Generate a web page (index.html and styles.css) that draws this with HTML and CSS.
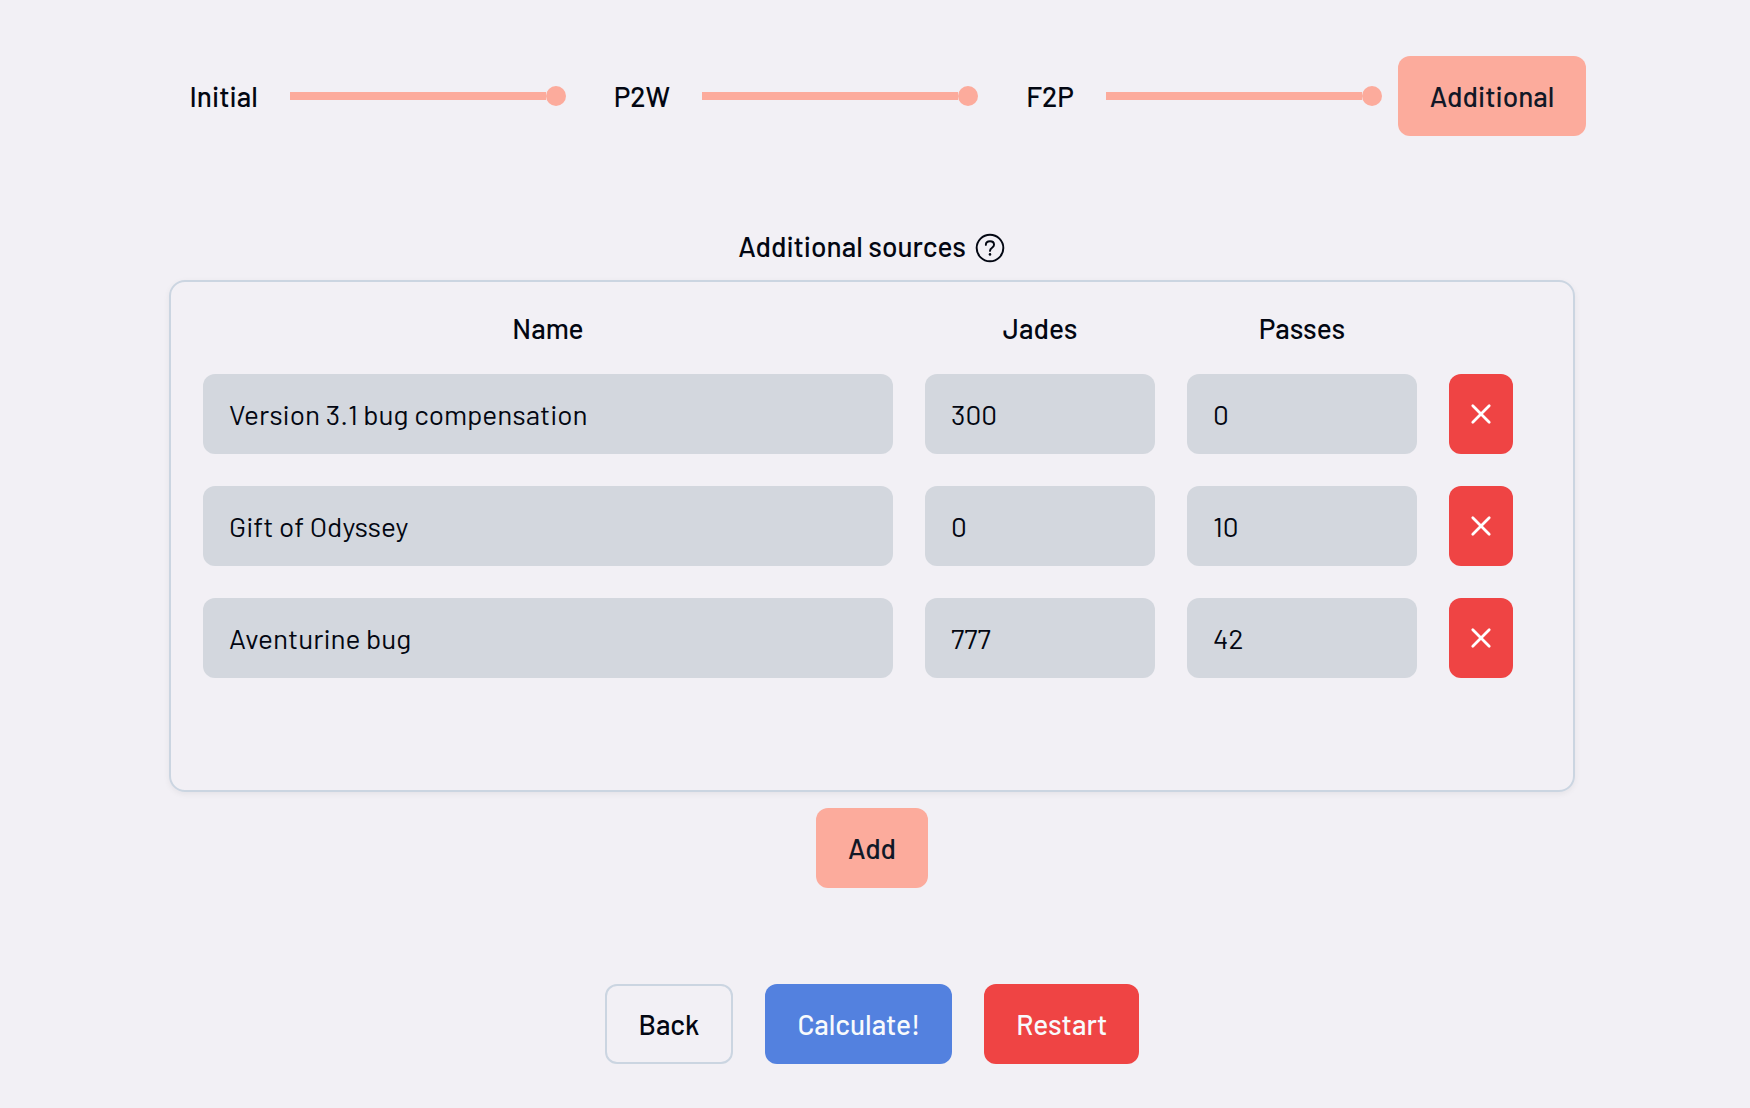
FILE: index.html
```html
<!DOCTYPE html>
<html lang="en">
<head>
<meta charset="utf-8">
<meta name="viewport" content="width=device-width, initial-scale=1">
<title>Additional sources</title>
<link rel="stylesheet" href="styles.css">
</head>
<body>
<svg class="sprite" aria-hidden="true">
  <symbol id="cross" viewBox="0 0 15 15">
    <path d="M3.65 3.65 11.35 11.35M11.35 3.65 3.65 11.35" fill="none" stroke="currentColor" stroke-width="1.3" stroke-linecap="round"/>
  </symbol>
</svg>
<main class="page">
  <nav class="stepper" aria-label="Steps">
    <button class="button" type="button">Initial</button>
    <span class="connector"></span>
    <button class="button" type="button">P2W</button>
    <span class="connector"></span>
    <button class="button" type="button">F2P</button>
    <span class="connector"></span>
    <button class="button button-accent" type="button" aria-current="step">Additional</button>
  </nav>

  <form class="sources">
    <div class="heading">
      <h1 class="title">Additional sources</h1>
      <button class="help" type="button" aria-label="Help">
        <svg class="icon" viewBox="0 0 15 15" fill="none" stroke="currentColor" aria-hidden="true">
          <circle cx="7.5" cy="7.5" r="6.25" stroke-width="0.9"/>
          <path d="M5.55 6.05C5.55 4.95 6.4 4.35 7.5 4.35S9.4 5.05 9.4 6C9.4 7.45 7.5 7.3 7.5 8.85" stroke-width="0.9" stroke-linecap="round"/>
          <circle cx="7.5" cy="10.5" r="0.6" fill="currentColor" stroke="none"/>
        </svg>
      </button>
    </div>

    <div class="panel">
      <table class="grid">
        <colgroup><col><col class="col-number"><col class="col-number"><col class="col-action"></colgroup>
        <thead>
          <tr><th scope="col">Name</th><th scope="col">Jades</th><th scope="col">Passes</th><td></td></tr>
        </thead>
        <tbody>
          <tr>
            <td><input class="field" type="text" aria-label="Name" value="Version 3.1 bug compensation"></td>
            <td><input class="field" type="text" inputmode="numeric" aria-label="Jades" value="300"></td>
            <td><input class="field" type="text" inputmode="numeric" aria-label="Passes" value="0"></td>
            <td><button class="remove" type="button" aria-label="Remove"><svg class="icon"><use href="#cross"/></svg></button></td>
          </tr>
          <tr>
            <td><input class="field" type="text" aria-label="Name" value="Gift of Odyssey"></td>
            <td><input class="field" type="text" inputmode="numeric" aria-label="Jades" value="0"></td>
            <td><input class="field" type="text" inputmode="numeric" aria-label="Passes" value="10"></td>
            <td><button class="remove" type="button" aria-label="Remove"><svg class="icon"><use href="#cross"/></svg></button></td>
          </tr>
          <tr>
            <td><input class="field" type="text" aria-label="Name" value="Aventurine bug"></td>
            <td><input class="field" type="text" inputmode="numeric" aria-label="Jades" value="777"></td>
            <td><input class="field" type="text" inputmode="numeric" aria-label="Passes" value="42"></td>
            <td><button class="remove" type="button" aria-label="Remove"><svg class="icon"><use href="#cross"/></svg></button></td>
          </tr>
        </tbody>
      </table>
    </div>
    <button class="button button-accent" type="button">Add</button>
  </form>

  <div class="actions">
    <button class="button button-outline" type="button">Back</button>
    <button class="button button-primary" type="button">Calculate!</button>
    <button class="button button-danger" type="button">Restart</button>
  </div>
</main>
</body>
</html>
```
FILE: styles.css
```css
:root {
  --bg: #f2f0f5;
  --text: #030712;
  --accent: #fcab9c;
  --accent-text: #111827;
  --field: #d3d7de;
  --border: #cbd5e1;
  --danger: #ef4444;
  --primary: #5381df;
}

* {
  box-sizing: border-box;
}

body {
  margin: 0;
  background: var(--bg);
  color: var(--text);
  font: 500 28px/28px Barlow, Roboto, sans-serif;
}

button,
input {
  margin: 0;
  border: 0;
  font: inherit;
  color: inherit;
}

button {
  padding: 0;
  background: none;
  cursor: pointer;
}

.sprite {
  display: none;
}

.icon {
  display: block;
  width: 32px;
  height: 32px;
}

.page {
  display: flex;
  flex-direction: column;
  align-items: center;
  gap: 96px;
  padding: 56px 6px 40px 0;
}

.button {
  height: 80px;
  padding: 0 32px;
  border-radius: 12px;
}

.button-accent {
  background: var(--accent);
  color: var(--accent-text);
}

.button-outline {
  border: 2px solid var(--border);
}

.button-primary {
  background: var(--primary);
  color: #f8fafc;
}

.button-danger {
  background: var(--danger);
  color: #f8fafc;
}

.stepper {
  display: flex;
  align-items: center;
}

.connector {
  display: flex;
  align-items: center;
  width: 276px;
  margin-right: 16px;
}

.connector::before {
  content: "";
  flex: 1;
  height: 8px;
  background: var(--accent);
}

.connector::after {
  content: "";
  width: 20px;
  height: 20px;
  border-radius: 50%;
  background: var(--accent);
}

.sources {
  display: flex;
  flex-direction: column;
  align-items: center;
  gap: 16px;
  width: 100%;
  max-width: 1406px;
}

.heading {
  display: flex;
  align-items: flex-start;
  gap: 8px;
}

.title {
  margin: 0;
  font: inherit;
}

.panel {
  width: 100%;
  min-height: 512px;
  padding-right: 28px;
  border: 2px solid var(--border);
  border-radius: 16px;
  box-shadow: 0 2px 6px rgb(0 0 0 / 6%);
}

.grid {
  width: 100%;
  table-layout: fixed;
  border-collapse: separate;
  border-spacing: 32px;
}

.grid th,
.grid td {
  padding: 0;
  font-weight: inherit;
}

.col-number {
  width: 230px;
}

.col-action {
  width: 64px;
}

.field {
  display: block;
  width: 100%;
  height: 80px;
  padding: 0 26px;
  border-radius: 12px;
  background: var(--field);
  font-weight: 400;
}

.remove {
  display: grid;
  place-items: center;
  width: 100%;
  height: 80px;
  border-radius: 12px;
  background: var(--danger);
  color: #fff;
}

.actions {
  display: flex;
  gap: 32px;
}
```
